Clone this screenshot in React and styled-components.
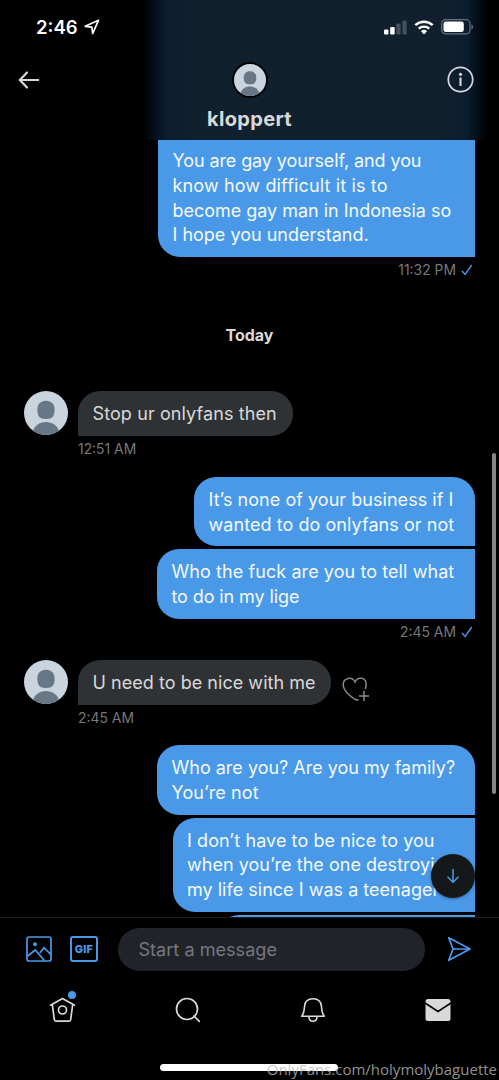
import React from "react";
import styled, { createGlobalStyle } from "styled-components";

const GlobalStyle = createGlobalStyle`
  * {
    box-sizing: border-box;
  }

  body {
    margin: 0;
    background: #000;
    font-family: Inter, "Liberation Sans", sans-serif;
  }
`;

const Avatar = ({ size, outlined }) => (
  <AvatarCircle $size={size} $outlined={outlined}>
    <svg viewBox="0 0 44 44" width="100%" height="100%">
      <rect width="44" height="44" fill="#cad4de" />
      <path
        d="M22 9.800c5.800 0 8.600 3.600 8.600 8.700 0 6.800-2 9.400-8.600 9.400s-8.600-2.600-8.600-9.400c0-5.100 2.800-8.700 8.600-8.700z"
        fill="#687785"
      />
      <path d="M8.500 42c1.500-7.500 7-11 13.500-11s12 3.500 13.500 11v4h-27z" fill="#687785" />
    </svg>
  </AvatarCircle>
);

const Lines = ({ lines }) =>
  lines.map(([text, spacing]) => (
    <Line key={text} $spacing={spacing}>
      {text}
    </Line>
  ));

const Received = ({ line, time, width, children }) => (
  <ReceivedRow>
    <Avatar size={44} />
    <div>
      <ReceivedBubble $width={width}>
        <Lines lines={[line]} />
      </ReceivedBubble>
      <Time>{time}</Time>
    </div>
    {children}
  </ReceivedRow>
);

const SentTime = ({ children }) => (
  <SentMeta>
    {children}
    <svg width="12" height="12" viewBox="0 0 12 12" fill="none">
      <path d="M1 7l3.200 3.500L10.700 1" stroke="#4a99e9" strokeWidth="1.400" />
    </svg>
  </SentMeta>
);

const App = () => {
  return (
    <Phone>
      <GlobalStyle />
      <Header>
        <StatusBar>
          <Clock>
            2:46
            <svg width="16" height="16" viewBox="0 0 16 16" fill="none">
              <path
                d="M1.200 7.300L14.500 1.300 8.700 14.500 7.800 8.200z"
                stroke="#fff"
                strokeWidth="1.700"
                strokeLinejoin="round"
              />
            </svg>
          </Clock>
          <StatusIcons>
            <svg width="23" height="15" viewBox="0 0 23 15">
              <rect x="0" y="9.500" width="4.500" height="5" rx="1.200" fill="#fff" />
              <rect x="6.200" y="7" width="4.500" height="7.500" rx="1.200" fill="#fff" />
              <rect x="12.300" y="3.500" width="4.300" height="11" rx="1.200" fill="#435060" />
              <rect x="18.400" y="0.500" width="4.300" height="14" rx="1.200" fill="#435060" />
            </svg>
            <svg width="20" height="15" viewBox="0 0 20 15" fill="none">
              <path d="M1.300 5.200a12.700 12.700 0 0 1 17.400 0" stroke="#fff" strokeWidth="2.500" />
              <path d="M4.700 8.700a7.700 7.700 0 0 1 10.600 0" stroke="#fff" strokeWidth="2.400" />
              <path d="M10 14.500l-3-3.200a4.300 4.300 0 0 1 6 0z" fill="#fff" />
            </svg>
            <svg width="33" height="16" viewBox="0 0 33 16">
              <rect x="0.700" y="0.700" width="28.300" height="14.200" rx="4" fill="none" stroke="#66717d" strokeWidth="1.200" />
              <rect x="2.500" y="2.500" width="20.300" height="10.600" rx="2.400" fill="#fff" />
              <path d="M30.500 5.500c2 .7 2 4 0 4.800z" fill="#66717d" />
            </svg>
          </StatusIcons>
        </StatusBar>
        <TitleBar>
          <BackIcon viewBox="0 0 22 18" fill="none">
            <path d="M9 1.500L1.800 9 9 16.500M2 9h18.300" stroke="#d9d9d9" strokeWidth="2.200" strokeLinecap="round" strokeLinejoin="round" />
          </BackIcon>
          <Avatar size={36} outlined />
          <InfoIcon viewBox="0 0 27 27" fill="none">
            <circle cx="13.500" cy="13.500" r="12.200" stroke="#d6dade" strokeWidth="1.700" />
            <circle cx="13.500" cy="8.300" r="1.600" fill="#d6dade" />
            <path d="M13.500 11.500v8.500" stroke="#d6dade" strokeWidth="2.100" />
          </InfoIcon>
        </TitleBar>
        <Name>kloppert</Name>
      </Header>

      <Conversation>
        <SentBubble $width={317} $cut>
          <Lines
            lines={[
              ["You are gay yourself, and you", -0.1],
              ["know how difficult it is to", 0.14],
              ["become gay man in Indonesia so", -0.02],
              ["I hope you understand.", 0],
            ]}
          />
        </SentBubble>
        <SentTime>11:32 PM</SentTime>
        <Day>Today</Day>
        <Received line={["Stop ur onlyfans then", 0.1]} time="12:51 AM" width={214.5} />
        <SentGroup>
          <SentBubble $width={281} $first>
            <Lines
              lines={[
                ["It’s none of your business if I", 0.04],
                ["wanted to do onlyfans or not", 0.06],
              ]}
            />
          </SentBubble>
          <SentBubble $width={318}>
            <Lines
              lines={[
                ["Who the fuck are you to tell what", 0.08],
                ["to do in my lige", -0.1],
              ]}
            />
          </SentBubble>
        </SentGroup>
        <SentTime>2:45 AM</SentTime>
        <Gap />
        <Received line={["U need to be nice with me", 0.04]} time="2:45 AM" width={253}>
          <HeartIcon viewBox="0 0 28 25" fill="none">
            <path
              d="M16.500 22.300c-1.200.9-2.500.7-3.800-.2C6.500 18 1.200 13.300 1.200 7.700c0-7 9-8.800 11.800-2.700 2.800-6 11.200-4.500 11.200 2.300 0 1.800-.4 3.300-1 4.700"
              stroke="#85888b"
              strokeWidth="1.500"
            />
            <path d="M22 14v10M17 19h10" stroke="#85888b" strokeWidth="1.500" />
          </HeartIcon>
        </Received>
        <SentGroup>
          <SentBubble $width={318} $first>
            <Lines
              lines={[
                ["Who are you? Are you my family?", 0],
                ["You’re not", 0.1],
              ]}
            />
          </SentBubble>
          <SentBubble $width={302.5}>
            <Lines
              lines={[
                ["I don’t have to be nice to you", 0.07],
                ["when you’re the one destroying", 0.03],
                ["my life since I was a teenager", 0.02],
              ]}
            />
          </SentBubble>
          <SentBubble $width={258} $peek />
        </SentGroup>
        <ScrollThumb />
        <JumpButton>
          <svg width="14" height="16" viewBox="0 0 14 16" fill="none">
            <path d="M7 1v13M1.500 8.800L7 14.300l5.500-5.500" stroke="#4a99e9" strokeWidth="1.500" />
          </svg>
        </JumpButton>
      </Conversation>

      <Composer>
        <svg width="26" height="26" viewBox="0 0 26 26" fill="none" stroke="#4a99e9" strokeWidth="1.700">
          <rect x="1" y="1" width="24" height="24" rx="2" />
          <circle cx="9" cy="8.300" r="2" fill="#4a99e9" stroke="none" />
          <path d="M1 20.500l8.300-6.500 9.200 10.800M13.800 17l4.200-5.300 7 7" />
        </svg>
        <GifBox>GIF</GifBox>
        <Input>Start a message</Input>
        <svg width="25" height="26" viewBox="0 0 26 27" fill="none" stroke="#4a99e9" strokeWidth="1.800">
          <path d="M1.800 1.800L24 13.500 1.800 25.200l4.500-11.700zM6.300 13.500H23" strokeLinejoin="round" />
        </svg>
      </Composer>

      <TabBar>
        <Tab>
          <svg width="27" height="26" viewBox="0 0 27 26" fill="none" stroke="#d9d9d9" strokeWidth="1.700">
            <path d="M1 8.500L13.500 1.500 26 8.500M3.300 7.500l2 15c.1 1 .7 1.700 1.700 1.700h13c1 0 1.600-.7 1.700-1.700l2-15" strokeLinejoin="round" />
            <circle cx="13.500" cy="13" r="4" />
          </svg>
          <Dot />
        </Tab>
        <Tab>
          <svg width="26" height="26" viewBox="0 0 26 26" fill="none" stroke="#d9d9d9" strokeWidth="1.700">
            <circle cx="12" cy="12" r="10.500" />
            <path d="M19 19l5.300 5.300" strokeLinecap="round" />
          </svg>
        </Tab>
        <Tab>
          <svg width="26" height="26" viewBox="0 0 26 26" fill="none" stroke="#d9d9d9" strokeWidth="1.600">
            <path d="M1.700 19.300h22.600c-2.300-2.500-2.500-6-2.800-9.800C21.200 4.600 18 1.700 13 1.700S4.800 4.600 4.500 9.500c-.3 3.800-.5 7.300-2.800 9.800zM9 19.500c0 6.300 8 6.300 8 0" strokeLinejoin="round" />
          </svg>
        </Tab>
        <Tab>
          <svg width="26" height="24" viewBox="0 0 26 24">
            <rect x="0.500" y="1" width="25" height="22" rx="2.500" fill="#d9d9d9" />
            <path d="M0 5l13 8.500L26 5" fill="none" stroke="#000" strokeWidth="1.700" />
          </svg>
        </Tab>
      </TabBar>
      <HomeIndicator />
      <Watermark>OnlyFans.com/holymolybaguette</Watermark>
    </Phone>
  );
};

const Phone = styled.div`
  position: relative;
  display: flex;
  flex-direction: column;
  width: 499px;
  height: 1080px;
  background: #000;
  overflow: hidden;
  white-space: nowrap;
`;

const Header = styled.header`
  display: flex;
  flex-direction: column;
  flex-shrink: 0;
  height: 140px;
  background:
    linear-gradient(
      90deg,
      #000 144px,
      #04101d 155px,
      #0b1d30 165px,
      #11202e 195px,
      #11202e 440px,
      #0b1d30 467px,
      #04101d 476px,
      #000 487px
    );
`;

const StatusBar = styled.div`
  display: flex;
  justify-content: space-between;
  align-items: center;
  height: 54px;
  padding: 0 25px 0 36px;
`;

const Clock = styled.div`
  display: flex;
  align-items: center;
  gap: 6px;
  font-size: 18.5px;
  font-weight: 600;
  color: #fff;
`;

const StatusIcons = styled.div`
  display: flex;
  align-items: center;
  gap: 7px;
`;

const TitleBar = styled.div`
  display: grid;
  grid-template-columns: 1fr 36px 1fr;
  align-items: center;
  height: 51px;
  padding: 0 25px;
`;

const BackIcon = styled.svg`
  width: 22px;
  height: 18px;
  margin-left: -7px;
`;

const InfoIcon = styled.svg`
  width: 27px;
  height: 27px;
  justify-self: end;
`;

const AvatarCircle = styled.div`
  flex-shrink: 0;
  width: ${({ $size }) => $size}px;
  height: ${({ $size }) => $size}px;
  border: ${({ $outlined }) => ($outlined ? "2px solid #000" : "none")};
  border-radius: 50%;
  overflow: hidden;

  svg {
    display: block;
  }
`;

const Name = styled.div`
  line-height: 28px;
  text-align: center;
  font-size: 20px;
  font-weight: 700;
  letter-spacing: 0.35px;
  color: #d9d9d9;
`;

const Conversation = styled.main`
  position: relative;
  display: flex;
  flex-direction: column;
  flex-shrink: 0;
  height: 777px;
  padding: 0 24px;
  overflow: hidden;
`;

const Bubble = styled.div`
  flex-shrink: 0;
  width: ${({ $width }) => $width}px;
  padding: 11px 14px 9px 14.5px;
`;

const SentBubble = styled(Bubble)`
  align-self: flex-end;
  padding-top: ${({ $cut }) => ($cut ? 9 : 11)}px;
  height: ${({ $peek }) => ($peek ? "44.8px" : "auto")};
  border-radius: ${({ $first, $cut }) =>
    $cut ? "0 0 0 22px" : $first ? "22px 22px 0 22px" : "22px 0 0 22px"};
  background: #4a99e9;
  color: #f3f9ff;
`;

const ReceivedBubble = styled(Bubble)`
  border-radius: 22px 22px 22px 0;
  background: #2f3235;
  color: #d9d9d9;
`;

const Line = styled.div`
  line-height: 24.8px;
  font-size: 18px;
  letter-spacing: ${({ $spacing }) => $spacing}px;
`;

const SentGroup = styled.div`
  display: flex;
  flex-direction: column;
  flex-shrink: 0;
  gap: 2.6px;
`;

const Time = styled.div`
  height: 26px;
  line-height: 26px;
  font-size: 13.9px;
  color: #76797c;
`;

const SentMeta = styled(Time)`
  display: flex;
  justify-content: flex-end;
  align-items: center;
  gap: 5px;
  flex-shrink: 0;
  padding-right: 2px;
`;

const Gap = styled.div`
  flex-shrink: 0;
  height: 15.2px;
`;

const Day = styled.div`
  flex-shrink: 0;
  height: 108px;
  padding-top: 42px;
  line-height: 20px;
  text-align: center;
  font-size: 16px;
  font-weight: 700;
  color: #d9d9d9;
`;

const ReceivedRow = styled.div`
  display: flex;
  flex-shrink: 0;
  gap: 10px;
  height: 85.6px;
`;

const HeartIcon = styled.svg`
  width: 28px;
  height: 25px;
  margin: 17px 0 0 1px;
`;

const ScrollThumb = styled.div`
  position: absolute;
  top: 313px;
  right: 3.5px;
  width: 4px;
  height: 341px;
  border-radius: 2px;
  background: #858585;
`;

const JumpButton = styled.div`
  position: absolute;
  top: 714px;
  right: 24px;
  display: flex;
  justify-content: center;
  align-items: center;
  width: 44px;
  height: 44px;
  border-radius: 50%;
  background: #15181b;
  box-shadow: 0 1px 3px rgba(0, 0, 0, 0.4);
`;

const Composer = styled.div`
  display: flex;
  align-items: center;
  flex-shrink: 0;
  height: 63px;
  padding: 0 26px;
  border-top: 1px solid #1c1f22;
`;

const GifBox = styled.div`
  display: flex;
  justify-content: center;
  align-items: center;
  width: 28px;
  height: 26px;
  margin-left: 18px;
  border: 2px solid #4a99e9;
  border-radius: 3px;
  font-size: 11px;
  font-weight: 800;
  letter-spacing: 0.2px;
  color: #4a99e9;
`;

const Input = styled.div`
  width: 307px;
  height: 43px;
  margin: 0 22px 0 20px;
  padding-left: 20.5px;
  border-radius: 22px;
  background: #202329;
  line-height: 43px;
  font-size: 18.1px;
  color: #75787c;
`;

const TabBar = styled.nav`
  display: grid;
  grid-template-columns: repeat(4, 125px);
  flex-shrink: 0;
  height: 60px;
`;

const Tab = styled.div`
  position: relative;
  display: flex;
  justify-content: center;
  align-items: center;
`;

const Dot = styled.span`
  position: absolute;
  top: 11px;
  left: 68px;
  width: 8px;
  height: 8px;
  border-radius: 50%;
  background: #4a99e9;
`;

const HomeIndicator = styled.div`
  flex-shrink: 0;
  width: 178px;
  height: 7px;
  margin: 24px 0 0 160px;
  border-radius: 4px;
  background: #fff;
`;

const Watermark = styled.div`
  position: absolute;
  right: 2px;
  bottom: 1px;
  line-height: 20px;
  font-family: "Open Sans", sans-serif;
  font-size: 15px;
  color: rgba(185, 185, 185, 0.8);
`;

export default App;
